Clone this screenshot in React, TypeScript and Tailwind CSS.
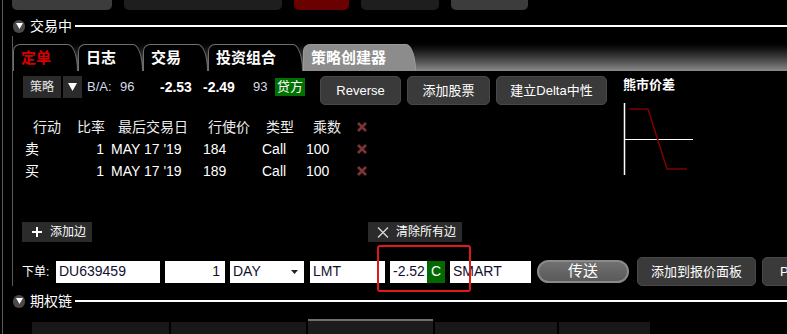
import React from "react";

const XMark = () => (
  <svg width="10" height="10" viewBox="0 0 10 10" className="shrink-0">
    <path d="M1 1 L9 9 M9 1 L1 9" stroke="#7d3434" strokeWidth="2.6" />
  </svg>
);

const Collapse = () => (
  <div className="w-[12px] h-[13px] rounded-full bg-[#4a4a4a] flex items-center justify-center">
    <svg width="7" height="6" viewBox="0 0 7 6">
      <path d="M0 0 H7 L3.5 6 Z" fill="#fff" />
    </svg>
  </div>
);

const SectionHeader = ({ title }: { title: string }) => (
  <div className="flex items-center h-[14px] pl-[10px]">
    <Collapse />
    <span className="ml-[5px] text-[14px] leading-[14px] text-white">{title}</span>
    <div className="ml-[3px] flex-1 h-[2px] bg-white" />
  </div>
);

const tabs = [
  { label: "定单", cls: "w-[65px] text-[#d40000] bg-black border-[#6e6e6e]" },
  { label: "日志", cls: "w-[65px] text-white bg-black border-[#6e6e6e]" },
  { label: "交易", cls: "w-[65px] text-white bg-black border-[#6e6e6e]" },
  { label: "投资组合", cls: "w-[95px] text-white bg-black border-[#6e6e6e]" },
  { label: "策略创建器", cls: "w-[113px] text-white bg-[#8c8c8c] border-[#9a9a9a]" },
];

const legs = [
  { act: "卖", strike: "184" },
  { act: "买", strike: "189" },
];

const GrayButton = ({ label, w }: { label: React.ReactNode; w: string }) => (
  <div
    className={`${w} h-[29px] rounded-[5px] bg-[#3a3a3a] border border-[#484848] flex items-center justify-center text-[13px] text-white`}
  >
    {label}
  </div>
);

export default function App() {
  return (
    <div className="relative w-[787px] h-[334px] overflow-hidden bg-black text-white font-[family-name:'Liberation_Sans','Noto_Sans_CJK_SC',sans-serif]">
      <div className="ml-[2px] h-full border-l border-[#5a5a5a] flex flex-col">
        {/* top strip of cut-off buttons */}
        <div className="flex h-[10px]">
          <div className="ml-[9px] w-[100px] h-full rounded-b-[5px] bg-[#3c3c3c]" />
          <div className="ml-[12px] w-[158px] h-full rounded-b-[5px] bg-[#1e1e1e]" />
          <div className="ml-[12px] w-[55px] h-full rounded-b-[5px] bg-[#6a0000]" />
          <div className="ml-[12px] w-[78px] h-full rounded-b-[5px] bg-[#1e1e1e]" />
          <div className="ml-[12px] w-[77px] h-full rounded-b-[5px] bg-[#3c3c3c]" />
        </div>

        <div className="mt-[9px]">
          <SectionHeader title="交易中" />
        </div>

        {/* panel */}
        <div className="ml-[9px] mt-[3px] border-l border-[#5a5a5a] flex flex-col h-[250px]">
          <div className="h-[35px] flex items-end bg-linear-to-b from-black from-[10%] to-[#8a8a8a]">
            {tabs.map((t) => (
              <div
                key={t.label}
                className={`${t.cls} shrink-0 h-[27px] border border-b-0 rounded-tl-[7px] rounded-tr-[10px_27px] pl-[7px] flex items-center text-[15px] font-bold`}
              >
                {t.label}
              </div>
            ))}
          </div>

          <div className="flex mt-[5px]">
            {/* left */}
            <div className="w-[602px] shrink-0 flex flex-col">
              <div className="flex items-start h-[29px]">
                <div className="ml-[10px] w-[38px] h-[22px] bg-[#2b2b2b] flex items-center justify-center text-[12px] text-[#e8e8e8]">
                  策略
                </div>
                <div className="ml-[2px] w-[19px] h-[22px] bg-[#2b2b2b] flex items-center justify-center">
                  <svg width="9" height="8" viewBox="0 0 9 8">
                    <path d="M0 0 H9 L4.5 8 Z" fill="#fff" />
                  </svg>
                </div>
                <div className="ml-[5px] flex items-center h-[22px] text-[13px] text-[#d6dcea]">
                  <span className="w-[33px]">B/A:</span>
                  <span className="w-[40px]">96</span>
                  <span className="w-[43px] text-[14px] font-bold text-white">-2.53</span>
                  <span className="w-[50px] text-[14px] font-bold text-white">-2.49</span>
                  <span className="w-[22px]">93</span>
                  <span className="w-[30px] h-[18px] bg-[#007000] text-white flex items-center justify-center">
                    贷方
                  </span>
                </div>
                <div className="ml-[15px]">
                  <GrayButton label="Reverse" w="w-[81px]" />
                </div>
                <div className="ml-[6px]">
                  <GrayButton label="添加股票" w="w-[83px]" />
                </div>
                <div className="ml-[6px]">
                  <GrayButton label="建立Delta中性" w="w-[111px]" />
                </div>
              </div>

              <div className="mt-[11px] flex flex-col text-[14px] text-[#ececec]">
                <div className="flex items-center h-[22px]">
                  <span className="w-[57px] pl-[20px]">行动</span>
                  <span className="w-[38px] pl-[7px]">比率</span>
                  <span className="w-[92px] pl-[10px]">最后交易日</span>
                  <span className="w-[58px] pl-[8px]">行使价</span>
                  <span className="w-[47px] pl-[8px]">类型</span>
                  <span className="w-[52px] pl-[8px]">乘数</span>
                  <XMark />
                </div>
                {legs.map((l) => (
                  <div key={l.act} className="flex items-center h-[22px] text-white">
                    <span className="w-[57px] pl-[12px]">{l.act}</span>
                    <span className="w-[38px] pr-[4px] text-right">1</span>
                    <span className="w-[92px] pl-[3px]">MAY 17 '19</span>
                    <span className="w-[58px] pl-[3px]">{l.strike}</span>
                    <span className="w-[47px] pl-[4px]">Call</span>
                    <span className="w-[52px] pl-[1px]">100</span>
                    <XMark />
                  </div>
                ))}
              </div>
            </div>

            {/* right: payoff chart */}
            <div className="ml-[8px] pt-[1px] flex flex-col">
              <span className="text-[13px] leading-[16px] font-bold">熊市价差</span>
              <svg width="72" height="73" viewBox="0 0 72 73" className="mt-[10px]">
                <line x1="1.5" y1="0" x2="1.5" y2="72" stroke="#fff" strokeWidth="1.5" />
                <line x1="1" y1="36.5" x2="70" y2="36.5" stroke="#fff" strokeWidth="1.2" />
                <polyline
                  points="6,6 25,6 44,66 64,66"
                  fill="none"
                  stroke="#7c0000"
                  strokeWidth="1.6"
                />
              </svg>
            </div>
          </div>

          {/* leg buttons */}
          <div className="flex mt-[40px] h-[20px] text-[12px]">
            <div className="ml-[9px] shrink-0 w-[70px] h-full bg-[#2b2b2b] flex items-center pl-[10px] gap-[8px]">
              <svg width="10" height="10" viewBox="0 0 10 10">
                <path d="M5 0 V10 M0 5 H10" stroke="#fff" strokeWidth="2" />
              </svg>
              <span>添加边</span>
            </div>
            <div className="ml-[276px] shrink-0 w-[94px] h-full bg-[#2b2b2b] flex items-center pl-[9px] gap-[7px]">
              <svg width="12" height="11" viewBox="0 0 12 11">
                <path d="M1 0.5 L11 10.5 M11 0.5 L1 10.5" stroke="#d8d8d8" strokeWidth="1.3" />
              </svg>
              <span>清除所有边</span>
            </div>
          </div>

          {/* order row */}
          <div className="flex items-center mt-[15px] h-[29px] text-[14px] text-[#101030]">
            <span className="ml-[9px] shrink-0 w-[34px] text-[12px] text-white">下单:</span>
            <div className="shrink-0 w-[104px] h-[22px] bg-white pl-[3px] flex items-center">DU639459</div>
            <div className="ml-[5px] shrink-0 w-[60px] h-[22px] bg-white pr-[5px] flex items-center justify-end">1</div>
            <div className="ml-[5px] shrink-0 w-[74px] h-[22px] bg-white pl-[3px] pr-[6px] flex items-center justify-between">
              <span>DAY</span>
              <svg width="7" height="4" viewBox="0 0 7 4">
                <path d="M0 0 H7 L3.5 4 Z" fill="#222" />
              </svg>
            </div>
            <div className="ml-[6px] shrink-0 w-[75px] h-[22px] bg-white pl-[3px] flex items-center">LMT</div>
            <div className="ml-[5px] shrink-0 w-[37px] h-[22px] bg-white pl-[3px] flex items-center">-2.52</div>
            <div className="shrink-0 w-[18px] h-[22px] bg-[#006a00] text-white flex items-center justify-center">C</div>
            <div className="ml-[5px] shrink-0 w-[81px] h-[22px] bg-white pl-[3px] flex items-center">SMART</div>
            <div className="ml-[6px] shrink-0 w-[92px] h-[23px] rounded-full border-2 border-[#8a8a8a] bg-linear-to-b from-[#707070] to-[#5a5a5a] flex items-center justify-center text-white text-[15px]">
              传送
            </div>
            <div className="ml-[8px] shrink-0">
              <GrayButton label="添加到报价面板" w="w-[119px]" />
            </div>
            <div className="ml-[6px] shrink-0 w-[60px] h-[29px] rounded-[5px] bg-[#3a3a3a] border border-[#484848] flex items-center pl-[17px] text-[13px] text-white">
              P
            </div>
          </div>
        </div>

        <div className="mt-[8px]">
          <SectionHeader title="期权链" />
        </div>

        <div className="mt-[11px] h-[15px] flex items-end">
          <div className="ml-[29px] shrink-0 w-[137px] h-[12px] bg-[#181818]" />
          <div className="ml-[2px] shrink-0 w-[135px] h-[12px] bg-[#181818]" />
          <div className="ml-[2px] shrink-0 w-[125px] h-[15px] border-t-2 border-[#6e6e6e] bg-[#1c1c1c]" />
          <div className="ml-[2px] shrink-0 w-[122px] h-[12px] bg-[#181818]" />
          <div className="ml-[2px] shrink-0 w-[91px] h-[12px] bg-[#181818]" />
        </div>
      </div>

      {/* red highlight annotation around the price field */}
      <div className="absolute left-[377px] top-[245px] w-[94px] h-[47px] border-2 border-[#e01a1a] rounded-[3px]" />
    </div>
  );
}
